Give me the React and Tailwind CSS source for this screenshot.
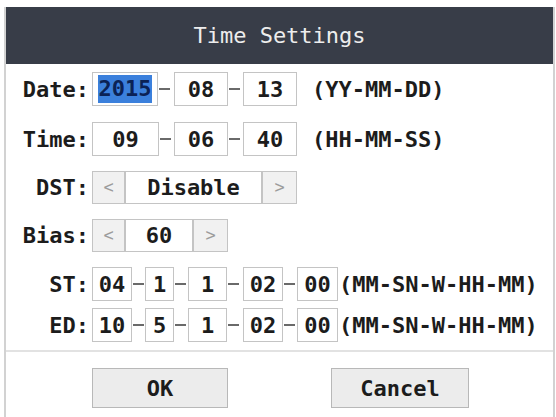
import React from "react";

const font = { fontFamily: '"DejaVu Sans Mono", "Liberation Mono", monospace' };

function Box({ w, children }) {
  return (
    <div className={`${w} h-full flex items-center justify-center border border-[#c4c4c4] bg-white`}>
      {children}
    </div>
  );
}

function Arrow({ w, children }) {
  return (
    <div className={`${w} h-full flex items-center justify-center border border-[#c4c4c4] bg-[#f1f1f1] text-[#9c9c9c] font-normal text-[17px]`}>
      {children}
    </div>
  );
}

function Dash({ w }) {
  return (
    <div className={`${w} h-full flex items-center`}>
      <div className="ml-[1px] w-[11px] h-[2px] bg-[#6a6a6a]" />
    </div>
  );
}

function Label({ children }) {
  return <div className="w-[83px] text-right shrink-0">{children}</div>;
}

function App() {
  return (
    <div className="w-[556px] h-[417px] bg-white pt-[7px] overflow-hidden" style={font}>
      <div className="ml-[4px] w-[551px] border-x-2 border-[#d2d2d2] text-[22px] font-bold text-[#1c1c1c]">
        {/* Title */}
        <div className="h-[57px] bg-[#383d48] flex items-center justify-center text-[#ededed] font-normal">
          Time Settings
        </div>

        {/* Date */}
        <div className="mt-[8px] h-[34px] flex items-center">
          <Label>Date:</Label>
          <div className="ml-[3px] h-full flex items-center">
            <Box w="w-[66px]">
              <span className="bg-[#3b80dc] text-[#0b2255] leading-[28px] px-[1px]">2015</span>
            </Box>
            <Dash w="w-[16px]" />
            <Box w="w-[54px]">08</Box>
            <Dash w="w-[15px]" />
            <Box w="w-[54px]">13</Box>
          </div>
          <div className="ml-[15px]">(YY-MM-DD)</div>
        </div>

        {/* Time */}
        <div className="mt-[16px] h-[34px] flex items-center">
          <Label>Time:</Label>
          <div className="ml-[3px] h-full flex items-center">
            <Box w="w-[67px]">09</Box>
            <Dash w="w-[15px]" />
            <Box w="w-[54px]">06</Box>
            <Dash w="w-[15px]" />
            <Box w="w-[54px]">40</Box>
          </div>
          <div className="ml-[15px]">(HH-MM-SS)</div>
        </div>

        {/* DST */}
        <div className="mt-[15px] h-[33px] flex items-center">
          <Label>DST:</Label>
          <div className="ml-[3px] h-full flex items-center">
            <Arrow w="w-[33px]">&lt;</Arrow>
            <Box w="w-[137px]">Disable</Box>
            <Arrow w="w-[35px]">&gt;</Arrow>
          </div>
        </div>

        {/* Bias */}
        <div className="mt-[15px] h-[33px] flex items-center">
          <Label>Bias:</Label>
          <div className="ml-[3px] h-full flex items-center">
            <Arrow w="w-[33px]">&lt;</Arrow>
            <Box w="w-[68px]">60</Box>
            <Arrow w="w-[35px]">&gt;</Arrow>
          </div>
        </div>

        {/* ST / ED */}
        {[
          ["ST:", ["04", "1", "1", "02", "00"], "mt-[15px]"],
          ["ED:", ["10", "5", "1", "02", "00"], "mt-[7px]"],
        ].map(([label, v, mt]) => (
          <div key={label} className={`${mt} h-[34px] flex items-center`}>
            <Label>{label}</Label>
            <div className="ml-[3px] h-full flex items-center">
              <Box w="w-[40px]">{v[0]}</Box>
              <Dash w="w-[13px]" />
              <Box w="w-[29px]">{v[1]}</Box>
              <Dash w="w-[14px]" />
              <Box w="w-[39px]">{v[2]}</Box>
              <Dash w="w-[16px]" />
              <Box w="w-[40px]">{v[3]}</Box>
              <Dash w="w-[14px]" />
              <Box w="w-[41px]">{v[4]}</Box>
            </div>
            <div className="ml-[1px] whitespace-nowrap">(MM-SN-W-HH-MM)</div>
          </div>
        ))}

        {/* Separator */}
        <div className="mt-[8px] h-[2px] bg-[#e2e2e2]" />

        {/* Buttons */}
        <div className="mt-[16px] pb-[9px] flex items-center">
          <button className="ml-[86px] w-[136px] h-[40px] bg-[#ececec] border border-[#b8b8b8] font-bold">
            OK
          </button>
          <button className="ml-[103px] w-[138px] h-[40px] bg-[#ececec] border border-[#b8b8b8] font-bold">
            Cancel
          </button>
        </div>
      </div>
    </div>
  );
}

export default App;
